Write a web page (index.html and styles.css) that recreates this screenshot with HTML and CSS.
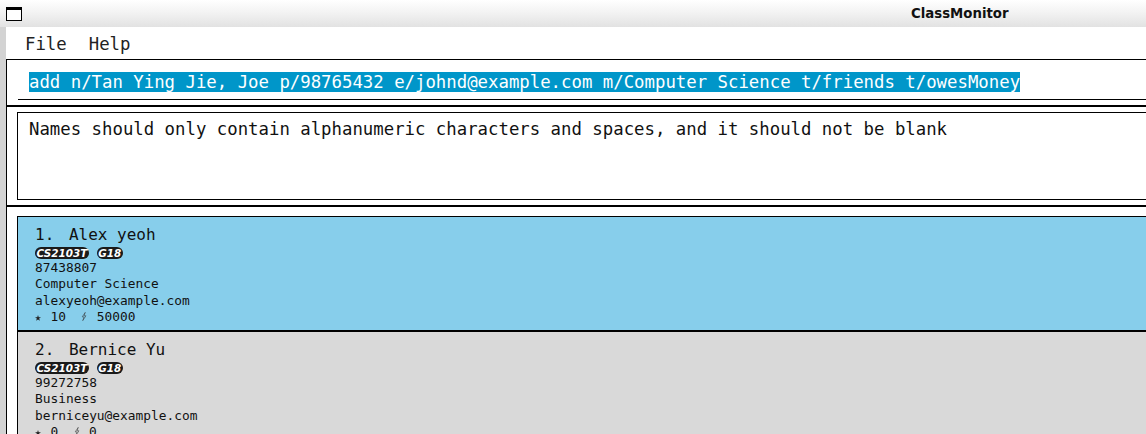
FILE: index.html
```html
<!DOCTYPE html>
<html>
<head>
<meta charset="utf-8">
<title>ClassMonitor</title>
<link rel="stylesheet" href="styles.css">
</head>
<body>
<div class="titlebar">
  <div class="win-icon"></div>
  <div class="title">ClassMonitor</div>
</div>
<div class="window">
  <div class="gutter"></div>
  <div class="main">
    <div class="menubar">
      <span class="menu-item">File</span>
      <span class="menu-item">Help</span>
    </div>
    <div class="panes">
      <div class="command-pane">
        <div class="command-field"><span class="selected">add n/Tan Ying Jie, Joe p/98765432 e/johnd@example.com m/Computer Science t/friends t/owesMoney</span></div>
      </div>
      <div class="result-pane">
        <div class="result-box">Names should only contain alphanumeric characters and spaces, and it should not be blank</div>
      </div>
      <div class="list-pane">
        <div class="card card-selected">
          <div class="name"><span class="idx">1. </span><span>Alex yeoh</span></div>
          <div class="tags"><span class="tag">CS2103T</span><span class="tag">G18</span></div>
          <div class="detail">87438807</div>
          <div class="detail">Computer Science</div>
          <div class="detail">alexyeoh@example.com</div>
          <div class="detail"><span class="ico"><svg class="star" viewBox="0 0 10 10" width="6" height="6"><path d="M5 0 L6.2 3.6 L10 3.6 L6.9 5.9 L8.1 9.5 L5 7.3 L1.9 9.5 L3.1 5.9 L0 3.6 L3.8 3.6 Z"/></svg></span> 10  <span class="ico"><svg class="bolt" viewBox="0 0 6 10" width="6" height="9"><path d="M4.4 0.4 L1 5.4 L3.1 5.4 L1.6 9.6 L5.2 4.2 L3.1 4.2 Z"/></svg></span> 50000</div>
        </div>
        <div class="card">
          <div class="name"><span class="idx">2. </span><span>Bernice Yu</span></div>
          <div class="tags"><span class="tag">CS2103T</span><span class="tag">G18</span></div>
          <div class="detail">99272758</div>
          <div class="detail">Business</div>
          <div class="detail">berniceyu@example.com</div>
          <div class="detail"><span class="ico"><svg class="star" viewBox="0 0 10 10" width="6" height="6"><path d="M5 0 L6.2 3.6 L10 3.6 L6.9 5.9 L8.1 9.5 L5 7.3 L1.9 9.5 L3.1 5.9 L0 3.6 L3.8 3.6 Z"/></svg></span> 0  <span class="ico"><svg class="bolt" viewBox="0 0 6 10" width="6" height="9"><path d="M4.4 0.4 L1 5.4 L3.1 5.4 L1.6 9.6 L5.2 4.2 L3.1 4.2 Z"/></svg></span> 0</div>
        </div>
      </div>
    </div>
  </div>
</div>
</body>
</html>
```
FILE: styles.css
```css
html, body {
  margin: 0;
  padding: 0;
  overflow: hidden;
}
body {
  width: 1146px;
  height: 434px;
  background: #fff;
  color: #111;
  font-family: "DejaVu Sans Mono", monospace;
}
.titlebar {
  height: 27px;
  display: flex;
  align-items: center;
  background: linear-gradient(#ffffff, #f3f3f3 45%, #e2e2e2);
}
.win-icon {
  margin-left: 6px;
  width: 14px;
  height: 10px;
  border: 1px solid #000;
  border-top: 3px solid #000;
  background: #fff;
  flex: none;
}
.title {
  margin-left: 889px;
  font-family: "DejaVu Sans", sans-serif;
  font-weight: bold;
  font-size: 13.3px;
  color: #111;
  white-space: nowrap;
}
.window {
  display: flex;
  height: 407px;
}
.gutter {
  width: 6px;
  flex: none;
  background: #d3d3d3;
}
.main {
  flex: 1;
  min-width: 0;
  overflow: hidden;
  background: #fff;
}
.menubar {
  height: 32px;
  display: flex;
  align-items: center;
  padding: 1px 0 0 8px;
  box-sizing: border-box;
  font-size: 17.33px;
  color: #222;
}
.menu-item {
  padding: 0 11px;
}
.panes {
  border-left: 1px solid #000;
  border-top: 1px solid #000;
}
.command-pane {
  padding-top: 7px;
  border-bottom: 2px solid #000;
}
.command-field {
  margin: 0 0 5px 11px;
  padding: 5px 11px 6.83px;
  border-bottom: 1px solid #000;
  font-size: 17.33px;
  line-height: 20.17px;
  white-space: nowrap;
}
.selected {
  background: #0096c9;
  color: #fff;
}
.result-pane {
  padding: 5px 0 5px 10px;
  border-bottom: 2px solid #000;
}
.result-box {
  box-sizing: border-box;
  height: 88px;
  border: 1px solid #000;
  border-right: 0;
  padding: 5.5px 11px;
  font-size: 17.33px;
  line-height: 20.17px;
  white-space: nowrap;
}
.list-pane {
  padding: 9px 0 0 10px;
}
.card {
  border: 1px solid #000;
  border-right: 0;
  padding: 8.5px 0 4.7px 17px;
  background: #d9d9d9;
}
.card-selected {
  background: #87ceeb;
}
.name {
  display: flex;
  gap: 5px;
  font-size: 16px;
  line-height: 18.62px;
}
.idx {
  white-space: pre;
}
.tags {
  display: flex;
  gap: 8px;
  height: 12px;
  margin: 2.5px 0 1.5px;
}
.tag {
  background: #1a1a1a;
  color: #fff;
  font-family: "DejaVu Sans", sans-serif;
  font-style: italic;
  font-weight: bold;
  font-size: 10.4px;
  line-height: 12px;
  padding: 0 1.5px;
  border-radius: 6px;
}
.detail {
  font-size: 12.85px;
  line-height: 16.3px;
  white-space: pre;
}
.ico {
  display: inline-block;
  width: 1ch;
}
.star {
  fill: #222;
  vertical-align: 0;
}
.bolt {
  fill: none;
  stroke: #333;
  stroke-width: 0.6;
  vertical-align: 0;
}
```
